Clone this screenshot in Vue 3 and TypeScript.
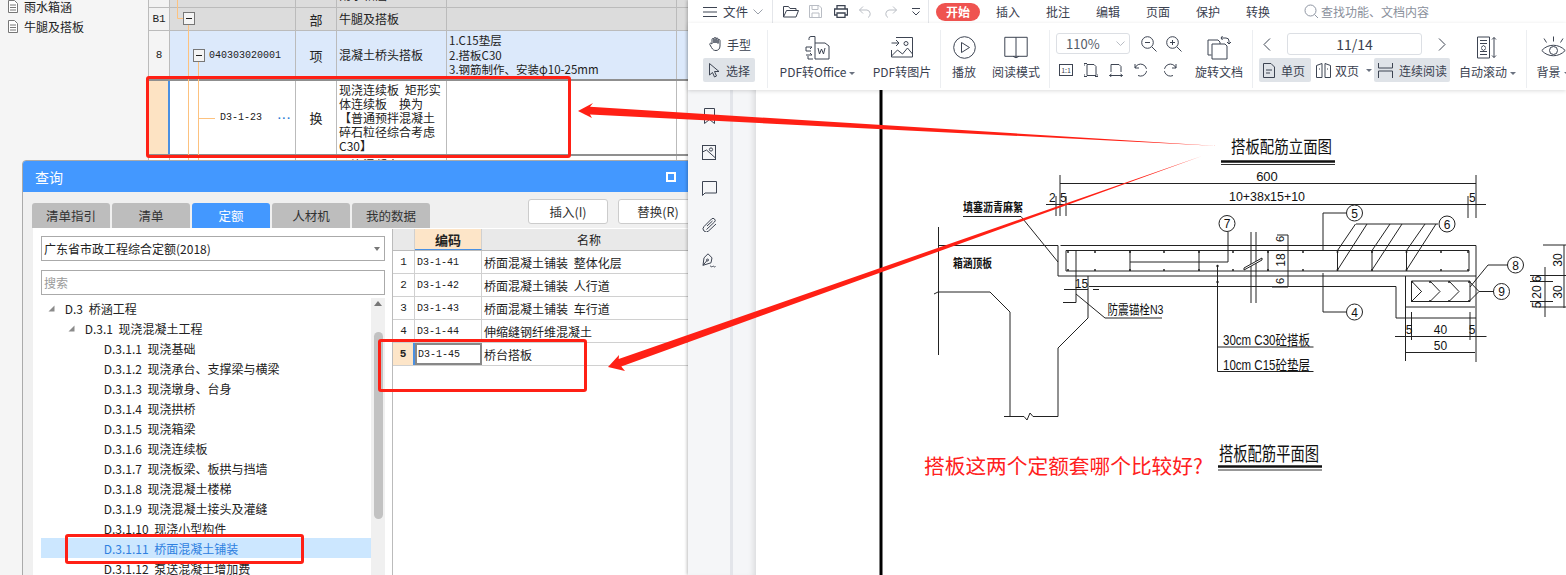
<template>
  <div class="screen">
    <!-- estimating app -->
    <section class="app">
      <aside class="side-tree">
        <div class="side-item cut"><svg class="doc" width="10" height="13" viewBox="0 0 10 13"><path d="M.5.500h6l3 3v9h-9zM2 5h6M2 7.500h6M2 10h6" /></svg>雨水箱涵</div>
        <div class="side-item"><svg class="doc" width="10" height="13" viewBox="0 0 10 13"><path d="M.5.500h6l3 3v9h-9zM2 5h6M2 7.500h6M2 10h6" /></svg>牛腿及搭板</div>
      </aside>

      <div class="sheet">
        <div v-for="(row, i) in sheetRows" :key="i" class="sheet-row" :class="row.kind">
          <div class="c c-no">{{ row.no }}</div>
          <div class="c c-code"><template v-if="row.code">{{ row.code }}</template><span v-if="row.kind === 'active'" class="dots">···</span></div>
          <div class="c c-type">{{ row.type }}</div>
          <div class="c c-name"><div v-for="(l, n) in row.name" :key="n">{{ l }}</div></div>
          <div class="c c-feat"><div v-for="(l, n) in row.feat" :key="n">{{ l }}</div></div>
          <div class="c c-end"></div>
        </div>
        <svg class="connectors" width="80" height="160" viewBox="148 0 80 160">
          <path d="M177.500 0V18.500H183M188.500 24V160M198.500 61V160M199 118.500H215" fill="none" stroke="#fdc27f" />
          <g fill="#f4f4f4" stroke="#777">
            <rect x="183.500" y="12.500" width="11" height="12" />
            <rect x="193.500" y="49.500" width="11" height="12" />
          </g>
          <path d="M186 18.500h6M196 55.500h6" stroke="#222" />
        </svg>
      </div>

      <!-- query dialog -->
      <div class="dialog">
        <header class="dlg-head">
          <span>查询</span>
          <i class="maxi"></i>
        </header>
        <div class="dlg-bar">
          <div v-for="t in tabs" :key="t" class="tab" :class="{ on: t === '定额' }">{{ t }}</div>
          <button class="btn first">插入(I)</button>
          <button class="btn">替换(R)</button>
        </div>
        <div class="dlg-body">
          <div class="left-panel">
            <div class="field">广东省市政工程综合定额(2018)<i class="caret"></i></div>
            <div class="field search">搜索</div>
            <div class="tree-wrap">
              <div class="tree">
                <div v-for="n in treeRows" :key="n.text" class="tree-row" :class="[`lv${n.level}`, { sel: n.sel }]">
                  <svg v-if="n.level < 3" class="tri" width="7" height="7" viewBox="0 0 7 7"><path d="M6.500.500v6h-6z" fill="#8b8b8b" /></svg>
                  {{ n.text }}
                </div>
              </div>
              <div class="scroll">
                <svg width="10" height="7" viewBox="0 0 10 7"><path d="M5 1l4 5H1z" fill="#777" /></svg>
                <i class="thumb"></i>
              </div>
            </div>
          </div>
          <div class="quota">
            <div class="q-row q-head">
              <div class="q-no"></div>
              <div class="q-code">编码</div>
              <div class="q-name">名称</div>
            </div>
            <div v-for="(q, i) in quotaRows" :key="q.code" class="q-row" :class="{ cur: i === 4 }">
              <div class="q-no">{{ i + 1 }}</div>
              <div class="q-code">{{ q.code }}</div>
              <div class="q-name">{{ q.name }}</div>
            </div>
          </div>
        </div>
      </div>
    </section>

    <!-- pdf reader -->
    <section class="wps">
      <div class="top-row">
        <svg class="ic hamb" width="14" height="12" viewBox="0 0 14 12"><path d="M0 1.500h14M0 6h14M0 10.500h14" /></svg>
        <span class="file">文件</span>
        <svg class="ic chev" width="10" height="6" viewBox="0 0 10 6"><path d="M.5.500L5 5 9.500.500" /></svg>
        <i class="top-div"></i>
        <div class="quick">
          <svg class="ic" width="16" height="13" viewBox="0 0 16 13"><path d="M.5 12V1.500h5l1.500 2h6v2M.5 12l3-6.500h12L13 12z" /></svg>
        </div>
        <div class="quick">
          <svg class="ic off" width="13" height="13" viewBox="0 0 13 13"><path d="M.5.500h9.500l2.500 2.500v9.500H.5zM3 .500v4h6v-4M3 12.500V8h7v4.500" /></svg>
        </div>
        <div class="quick">
          <svg class="ic" width="14" height="13" viewBox="0 0 14 13"><path d="M3 4V.500h8V4M3 10H.500V4h13v6H11M3 8h8v4.500H3z" stroke-width="1.300" /></svg>
        </div>
        <div class="quick">
          <svg class="ic off" width="13" height="12" viewBox="0 0 13 12"><path d="M4 .500L.500 4 4 7.500M.500 4H8a4 4 0 0 1 1 7.500" /></svg>
        </div>
        <div class="quick">
          <svg class="ic off" width="13" height="12" viewBox="0 0 13 12"><path d="M9 .500L12.500 4 9 7.500M12.500 4H5a4 4 0 0 0-1 7.500" /></svg>
        </div>
        <div class="quick">
          <svg class="ic" width="8" height="8" viewBox="0 0 8 8"><path d="M0 .500h8M.500 3.500L4 7l3.500-3.500" /></svg>
        </div>
        <i class="top-div two"></i>
        <span class="pill">开始</span>
        <span v-for="m in menus" :key="m" class="menu">{{ m }}</span>
        <svg class="ic search-ic" width="15" height="15" viewBox="0 0 15 15"><circle cx="6.500" cy="6.500" r="5.500" /><path d="M10.500 10.500L14 14" /></svg>
        <span class="find">查找功能、文档内容</span>
      </div>

      <div class="ribbon">
        <div class="grp g-hand">
          <div class="mini up"><svg class="ic" width="13" height="14" viewBox="0 0 13 14"><path d="M3 7V2.500a1 1 0 0 1 2 0V6 1.500a1 1 0 0 1 2 0V6 2a1 1 0 0 1 2 0v4.500-3a1 1 0 0 1 2 0V9c0 3-2 4.500-4 4.500S4 13 2.500 10.500L.800 7.500c-.5-1 1-1.800 1.500-1z" /></svg>手型</div>
          <div class="mini hi"><svg class="ic" width="12" height="15" viewBox="0 0 12 15"><path d="M.5.500v11.500l3-2.500 2 4.500 2-1-2-4.500h4.500z" /></svg>选择</div>
        </div>

        <div class="grp g-pdf">
          <div class="big w77">
            <svg class="ic" width="25" height="25" viewBox="0 0 25 25"><path d="M10 8V1.500H6a2 2 0 0 0-2 2V5M10 8h10l4 3v13H10zM13 13l1.500 6 2-5 2 5 1.500-6M1 12h6M1 12v4h5M1 20h6M7 20l-2-2M7 12l-2 2M8 24H3v-3" /></svg>
            <span>PDF转Office<i class="drop"></i></span>
          </div>
          <div class="big w58">
            <svg class="ic" width="22" height="21" viewBox="0 0 22 21"><path d="M5 .500h16.500v19.500H.5v-7M.5 6h7M5 3l3 3-3 3M.5 19l6-6 5 4 5-6 5 6" /><circle cx="15" cy="6.500" r="2" /></svg>
            <span>PDF转图片</span>
          </div>
        </div>

        <div class="grp g-play">
          <div class="big w24">
            <svg class="ic" width="23" height="23" viewBox="0 0 23 23"><circle cx="11.500" cy="11.500" r="10.800" /><path d="M8.500 6.500v10l8-5z" /></svg>
            <span>播放</span>
          </div>
          <div class="big w48">
            <svg class="ic" width="24" height="22" viewBox="0 0 24 22"><path d="M.8.800H12v19H.800zM12 .800h11.200v19H12M9 19.800l3 1.500 3-1.500" /></svg>
            <span>阅读模式</span>
          </div>
        </div>

        <div class="grp g-zoom">
          <div class="zoom-tools">
            <div class="zoom-top">
              <div class="zoom-box">110%<svg class="ic off" width="9" height="5" viewBox="0 0 9 5"><path d="M.5.500L4.500 4.500 8.500.500" /></svg></div>
              <svg class="ic lens" width="16" height="16" viewBox="0 0 16 16"><circle cx="6.500" cy="6.500" r="5.800" /><path d="M10.800 10.800L15.500 15.500M4 6.500h5" /></svg>
              <svg class="ic lens" width="16" height="16" viewBox="0 0 16 16"><circle cx="6.500" cy="6.500" r="5.800" /><path d="M10.800 10.800L15.500 15.500M4 6.500h5M6.500 4v5" /></svg>
            </div>
            <div class="zoom-bottom">
              <svg class="ic" width="14" height="12" viewBox="0 0 14 12"><rect x=".5" y=".5" width="13" height="11" /><text x="7" y="9" class="mini-t">1:1</text></svg>
              <svg class="ic" width="14" height="14" viewBox="0 0 14 14"><path d="M3 1.500h7l2 2v9H3zM0 3V.5h3M0 11v2.500h3M14 11v2.500h-3" /></svg>
              <svg class="ic" width="14" height="14" viewBox="0 0 14 14"><path d="M2 9V1.500h8l2 2V9M.5 12.500h13M2.500 11L.5 12.500 2.500 14M11.500 11l2 1.500-2 1.500" /></svg>
              <svg class="ic" width="16" height="14" viewBox="0 0 16 14"><path d="M1 5a6 6 0 1 1 3 7.500M1 1v4h4" stroke-dasharray="15 2" /></svg>
              <svg class="ic" width="16" height="14" viewBox="0 0 16 14"><path d="M15 5a6 6 0 1 0-3 7.500M15 1v4h-4" stroke-dasharray="15 2" /></svg>
            </div>
          </div>
          <div class="big w48 rot">
            <svg class="ic" width="24" height="25" viewBox="0 0 24 25"><path d="M4.500 20H1V5h10l2 2v2M5 9h13l2 2v13H5zM14 3h5a3 3 0 0 1 3 3v2M15.500 1L14 3l1.500 2M20 7l2 2 2-2" /></svg>
            <span>旋转文档</span>
          </div>
        </div>

        <div class="grp g-read">
          <div class="read-col">
            <div class="pager">
              <svg class="ic" width="8" height="13" viewBox="0 0 8 13"><path d="M7 .500L1 6.500l6 6" /></svg>
              <div class="page-box">11/14</div>
              <svg class="ic" width="8" height="13" viewBox="0 0 8 13"><path d="M1 .500l6 6-6 6" /></svg>
            </div>
            <div class="views">
              <div class="view hi v-one"><svg class="ic" width="12" height="15" viewBox="0 0 12 15"><path d="M.5.500h7.500l3.500 3.500v10.500H.5zM3 7h6M3 10h4" /></svg>单页</div>
              <div class="view v-two"><svg class="ic" width="15" height="15" viewBox="0 0 15 15"><path d="M.5 2.500L6 .500v14H.5zM14.500 2.500L9 .500v14h5.500zM3 6h1M11 6h1" /></svg>双页<i class="drop"></i></div>
              <div class="view hi v-cont"><svg class="ic" width="15" height="15" viewBox="0 0 15 15"><path d="M.5 0v5h14V0M.5 15V8h14v7" /></svg>连续阅读</div>
            </div>
          </div>
          <div class="big w57 auto">
            <svg class="ic" width="21" height="22" viewBox="0 0 21 22"><path d="M.5.500h12v21H.5zM3 4h7M3 7h7M3 15h7M3 18h7M4 11l2.500-2L9 11M4 12l2.500 2L9 12M17 1v20M15 3l2-2 2 2M15 19l2 2 2-2" /></svg>
            <span>自动滚动<i class="drop"></i></span>
          </div>
        </div>

        <div class="grp g-bg">
          <div class="big w24">
            <svg class="ic" width="25" height="24" viewBox="0 0 25 24"><path d="M.8 15c6-7 17-7 23.400 0-6.400 7-17.400 7-23.400 0z" /><circle cx="12.500" cy="15" r="4" /><path d="M12.500 1v5M3 3l2.500 4M22 3l-2.500 4" /></svg>
            <span>背景<i class="drop"></i></span>
          </div>
        </div>
      </div>

      <div class="reader">
        <nav class="rail">
          <div class="rail-icons">
            <svg class="ic" width="11" height="16" viewBox="0 0 11 16"><path d="M.5.500h10v15l-5-4-5 4z" /></svg>
            <svg class="ic" width="14" height="15" viewBox="0 0 14 15"><rect x=".5" y=".5" width="13" height="14" /><circle cx="9" cy="4.500" r="1.600" /><path d="M.5 7l4-2 9 8" /></svg>
            <svg class="ic" width="15" height="15" viewBox="0 0 15 15"><path d="M.5.500h14v11.500H3L.5 14.500z" /></svg>
            <svg class="ic" width="15" height="15" viewBox="0 0 15 15"><path d="M4.500 12.500L12.500 5a2 2 0 0 0-3-3L2 9.500a3 3 0 0 0 4.500 4.500L14 7M5 9l5.500-5" /></svg>
            <svg class="ic" width="16" height="16" viewBox="0 0 16 16"><path d="M7 .8l4 4-1 5-8 2.500 1-7.500zM2 12.300L6 7.500M9 13.500c1-1.500 1.500 1.500 2.500 0s1.500 1.500 3 0" /><circle cx="6.500" cy="7" r="1" /></svg>
          </div>
          <i class="rail-gap"></i>
        </nav>
        <div class="canvas">
          <svg class="cad" width="810" height="485" viewBox="756 90 810 485">
            <path d="M881 90V575" stroke="#000" stroke-width="3" fill="none" />
            <g fill="none" stroke="#222" stroke-width="1">
              <!-- dimensions -->
              <path d="M1060 175V216M1476 175V218M1060 183.500H1476M1046 204.500H1486M1066 196V216M1468 196V218M1056 196V216" />
              <!-- deck slab and abutment -->
              <path d="M938.500 227V355M938.500 245.500H1058V276H1476M1060.500 245.500H1476V362M1066 250.500H1469V271H1066zM1076 250.500V302.500H1063M1130 250.500V271M1199 250.500V271M1268 250.500V271M1337.500 250.500V271M1372 250.500V271M1406.500 250.500V271" />
              <path d="M1130 262H1228V232M1089 286.500H1396V318H1476M1405.500 276V307H1475M1411.500 281H1470V301.500H1411.500z" />
              <path d="M1251 232V303M1256 232V303" />
              <path d="M934 294L938 292H990L1010 312V416.500M1004 416.500H1024L1027 420L1030 413L1033 416.500H1058V348L1088 318V276" />
              <path d="M1064 289.500H1088M1093 289.500H1099M1076 294L1105 318H1162M1021 216.500L1058 262M963 216.500H1021" />
              <path d="M1288 235V287M1277 235H1288M1272 287H1288" />
              <!-- call-outs -->
              <path d="M1323 250V213H1346M1323 273V312H1346M1356 224H1438M1337.500 270L1367 224M1337.500 250.500L1355.500 224M1372 250.500L1390 224M1372 270L1402 224M1406.500 250.500L1425 224M1406.500 270L1436 224" />
              <path d="M1411.500 281L1421.500 291.500 1411.500 301.500M1430 281L1440 291.500 1430 301.500M1449 281L1459 291.500 1449 301.500M1469 281L1479 291.500 1469 301.500M1411.500 301.500L1421.500 291.500M1479 291.500H1494M1470 287L1488 265H1508" />
              <circle cx="1227" cy="223.500" r="8" /><circle cx="1354.500" cy="213" r="8" /><circle cx="1447" cy="224" r="8" /><circle cx="1354.500" cy="312" r="8" /><circle cx="1515.500" cy="265" r="8" /><circle cx="1501.500" cy="291.500" r="8" />
              <!-- leader and bottom dims -->
              <path d="M1217.500 266V371.500H1313.500M1217.500 347H1313.500M1395 336.500H1486.500M1411.500 312V340M1470 312V340M1405.500 307V361M1405.500 352.500H1475" />
              <path d="M1543 245H1566M1530 275.500H1566M1564 245V308M1545 267V317M1530 281.500H1553M1530 301.500H1553M1536 307H1566" />
            </g>
            <path d="M1244 268L1262 258V260L1244 270z" fill="#fff" stroke="#222" />
            <g fill="#222">
              <circle v-for="x in slabDots" :key="`t${x}`" :cx="x" cy="252" r="1" />
              <circle v-for="x in slabDots" :key="`b${x}`" :cx="x" cy="270" r="1" />
              <circle cx="1217.500" cy="266" r="1.200" /><circle cx="1217.500" cy="282" r="1.200" />
              <circle v-for="x in blockDots" :key="`u${x}`" :cx="x" cy="282" r="1" />
              <circle v-for="x in blockDots" :key="`l${x}`" :cx="x" cy="301" r="1" />
            </g>
            <g fill="#111" class="cad-t">
              <text x="1231" y="153" font-size="17" textLength="101" lengthAdjust="spacingAndGlyphs">搭板配筋立面图</text>
              <text x="963" y="212" font-size="12" textLength="60" font-weight="700" lengthAdjust="spacingAndGlyphs">填塞沥青麻絮</text>
              <text x="953" y="268" font-size="12" textLength="39" font-weight="700" lengthAdjust="spacingAndGlyphs">箱涵顶板</text>
              <text x="1107.500" y="314" font-size="13" textLength="56" lengthAdjust="spacingAndGlyphs">防震锚栓N3</text>
              <text x="1223" y="345" font-size="14" textLength="87" lengthAdjust="spacingAndGlyphs">30cm C30砼搭板</text>
              <text x="1223" y="370" font-size="14" textLength="87" lengthAdjust="spacingAndGlyphs">10cm C15砼垫层</text>
              <text x="1219" y="461" font-size="19" textLength="100" lengthAdjust="spacingAndGlyphs">搭板配筋平面图</text>
              <text x="1267" y="181" font-size="13" text-anchor="middle">600</text>
              <text x="1267" y="201" font-size="13" text-anchor="middle" textLength="76" lengthAdjust="spacingAndGlyphs">10+38x15+10</text>
              <text x="1049" y="202" font-size="12">2</text><text x="1060" y="202" font-size="12">5</text><text x="1469" y="202" font-size="12">5</text>
              <text x="1081.500" y="288" font-size="12" text-anchor="middle">15</text>
              <text x="1227" y="228" font-size="12" text-anchor="middle">7</text><text x="1354.500" y="217.500" font-size="12" text-anchor="middle">5</text><text x="1447" y="228.500" font-size="12" text-anchor="middle">6</text><text x="1354.500" y="316.500" font-size="12" text-anchor="middle">4</text><text x="1515.500" y="269.500" font-size="12" text-anchor="middle">8</text><text x="1501.500" y="296" font-size="12" text-anchor="middle">9</text>
              <text x="1409" y="334" font-size="12" text-anchor="middle">5</text><text x="1440.500" y="334" font-size="12" text-anchor="middle">40</text><text x="1472" y="334" font-size="12" text-anchor="middle">5</text><text x="1440.500" y="350" font-size="12" text-anchor="middle">50</text>
              <text font-size="12" text-anchor="middle" transform="translate(1285 260) rotate(-90)">18</text>
              <text font-size="11" text-anchor="middle" transform="translate(1284 239) rotate(-90)">6</text>
              <text font-size="11" text-anchor="middle" transform="translate(1284 281) rotate(-90)">6</text>
              <text font-size="12" text-anchor="middle" transform="translate(1562 260) rotate(-90)">30</text>
              <text font-size="12" text-anchor="middle" transform="translate(1562 292) rotate(-90)">30</text>
              <text font-size="12" text-anchor="middle" transform="translate(1541 279) rotate(-90)">6</text>
              <text font-size="12" text-anchor="middle" transform="translate(1541 292) rotate(-90)">20</text>
              <text font-size="12" text-anchor="middle" transform="translate(1541 305) rotate(-90)">5</text>
            </g>
            <path d="M1221 161.500H1335M1218 466.500H1322" stroke="#111" stroke-width="2.500" fill="none" />
            <path d="M1221 164.500H1335M1218 470H1322" stroke="#333" fill="none" />
          </svg>
          <p class="question">搭板这两个定额套哪个比较好?</p>
        </div>
      </div>
    </section>

    <!-- annotations drawn on top of the screenshot -->
    <i class="mark m1"></i>
    <i class="mark m2"></i>
    <i class="mark m3"></i>
    <svg class="arrows" width="1566" height="575" viewBox="0 0 1566 575">
      <polygon points="578,111 593,103 590,106.800 1218,146 590,114.500 592,118" fill="#ff2015" />
      <polygon points="608,367 619,355 618.700,359 1202,156 621.300,366.500 625,371" fill="#ff2015" />
    </svg>
  </div>
</template>

<script setup lang="ts">
type SheetRow = {
  kind: string;
  no: string;
  code: string;
  type: string;
  name: string[];
  feat: string[];
};

const sheetRows: SheetRow[] = [
  { kind: "part cut", no: "", code: "", type: "部", name: ["雨水箱涵"], feat: [] },
  { kind: "part", no: "B1", code: "", type: "部", name: ["牛腿及搭板"], feat: [] },
  {
    kind: "item",
    no: "8",
    code: "040303020001",
    type: "项",
    name: ["混凝土桥头搭板"],
    feat: ["1.C15垫层", "2.搭板C30", "3.钢筋制作、安装φ10-25mm"]
  },
  {
    kind: "active",
    no: "",
    code: "D3-1-23",
    type: "换",
    name: ["现浇连续板 矩形实", "体连续板　换为", "【普通预拌混凝土", "碎石粒径综合考虑", "C30】"],
    feat: []
  },
  { kind: "next", no: "", code: "", type: "", name: ["现浇混凝土"], feat: [] }
];

const tabs = ["清单指引", "清单", "定额", "人材机", "我的数据"];
const menus = ["插入", "批注", "编辑", "页面", "保护", "转换"];

const treeRows = [
  { level: 1, text: "D.3 桥涵工程" },
  { level: 2, text: "D.3.1 现浇混凝土工程" },
  { level: 3, text: "D.3.1.1 现浇基础" },
  { level: 3, text: "D.3.1.2 现浇承台、支撑梁与横梁" },
  { level: 3, text: "D.3.1.3 现浇墩身、台身" },
  { level: 3, text: "D.3.1.4 现浇拱桥" },
  { level: 3, text: "D.3.1.5 现浇箱梁" },
  { level: 3, text: "D.3.1.6 现浇连续板" },
  { level: 3, text: "D.3.1.7 现浇板梁、板拱与挡墙" },
  { level: 3, text: "D.3.1.8 现浇混凝土楼梯" },
  { level: 3, text: "D.3.1.9 现浇混凝土接头及灌缝" },
  { level: 3, text: "D.3.1.10 现浇小型构件" },
  { level: 3, text: "D.3.1.11 桥面混凝土铺装", sel: true },
  { level: 3, text: "D.3.1.12 泵送混凝土增加费" }
];

const quotaRows = [
  { code: "D3-1-41", name: "桥面混凝土铺装 整体化层" },
  { code: "D3-1-42", name: "桥面混凝土铺装 人行道" },
  { code: "D3-1-43", name: "桥面混凝土铺装 车行道" },
  { code: "D3-1-44", name: "伸缩缝钢纤维混凝土" },
  { code: "D3-1-45", name: "桥台搭板" }
];

const slabDots = [1068, 1095, 1130, 1164, 1199, 1233, 1268, 1303, 1337.5, 1372, 1406.5, 1441, 1468];
const blockDots = [1412, 1430, 1449, 1469];
</script>

<style>
html,
body {
  margin: 0;
  background: #fff;
}
</style>

<style scoped>
.screen {
  position: relative;
  display: flex;
  width: 1566px;
  height: 575px;
  overflow: hidden;
  background: #fff;
  color: #222;
  font-family: "Noto Sans CJK SC", "Liberation Sans", sans-serif;
  font-size: 12px;
}

/* estimating app */
.app {
  position: relative;
  display: flex;
  width: 688px;
  height: 575px;
  overflow: hidden;
  background: #f5f5f5;
}

.side-tree {
  width: 148px;
  flex: none;
  padding-left: 8px;
  box-sizing: border-box;
}

.side-item {
  display: flex;
  align-items: center;
  gap: 6px;
  height: 23px;
}

.side-item.cut {
  height: 18px;
  margin-top: -3px;
}

.doc {
  fill: #fff;
  stroke: #777;
  stroke-width: 1;
}

.sheet {
  position: relative;
  flex: 1;
  background: #fff;
  border-left: 1px solid #bbb;
  box-sizing: border-box;
}

.sheet-row {
  display: grid;
  grid-template-columns: 21px 126px 41px 110px 230px 11px;
  border-bottom: 1px solid #bbb;
  box-sizing: border-box;
}

.c {
  display: flex;
  flex-direction: column;
  justify-content: center;
  border-right: 1px solid #bbb;
  box-sizing: border-box;
  overflow: hidden;
  white-space: pre;
}

.c-no,
.c-type {
  align-items: center;
  font-size: 13px;
}

.c-no {
  font-family: "Liberation Mono", "Noto Sans CJK SC", monospace;
  font-size: 11px;
}

.c-code {
  flex-direction: row;
  align-items: center;
  justify-content: flex-start;
  padding-left: 39px;
  font-family: "Liberation Mono", "Noto Sans CJK SC", monospace;
  font-size: 10px;
}

.c-name {
  padding-left: 2px;
  line-height: 14px;
  word-spacing: 3px;
}

.c-feat {
  padding-left: 2px;
  line-height: 15px;
}

.c-end {
  border-right: 0;
}

.part {
  height: 23px;
  background: #dcdcdc;
}

.part .c-no {
  background: #f2f2f2;
}

.part.cut {
  height: 8px;
}

.part.cut .c {
  justify-content: flex-end;
  padding-bottom: 5px;
}

.item {
  height: 50px;
  background: #dce9fb;
  border-bottom: 2px solid #8f8f8f;
}

.item .c-no {
  background: #f4f4f4;
}

.item .c-feat {
  font-size: 11.500px;
  line-height: 14.500px;
}

.active {
  height: 75px;
  border-bottom: 2px solid #8f8f8f;
}

.active .c-no {
  background: #fde3c3;
  border-right: 2px solid #4a90e2;
}

.active .c-code {
  padding-left: 50px;
}

.dots {
  margin-left: 14px;
  color: #2f7fd6;
  font-size: 11px;
  font-weight: 700;
  letter-spacing: -2px;
}

.next {
  height: 20px;
}

.next .c-name {
  justify-content: flex-start;
  padding-top: 2px;
}

.connectors {
  position: absolute;
  top: 0;
  left: -1px;
}

/* query dialog */
.dialog {
  position: absolute;
  top: 160px;
  left: 22px;
  right: -10px;
  bottom: -2px;
  display: flex;
  flex-direction: column;
  background: #f0f0f0;
  border: 1px solid #aaa;
  border-radius: 4px 4px 0 0;
  box-sizing: border-box;
  overflow: hidden;
}

.dlg-head {
  display: flex;
  flex: none;
  align-items: center;
  justify-content: space-between;
  height: 31px;
  padding: 0 21px 0 12px;
  background: #4398ff;
  color: #fff;
  font-size: 14px;
}

.maxi {
  width: 6px;
  height: 6px;
  border: 2px solid #fff;
  background: #4398ff;
}

.dlg-bar {
  display: flex;
  flex: none;
  height: 29px;
  margin-top: 7px;
  padding-left: 9px;
  gap: 2px;
}

.tab {
  display: flex;
  align-items: center;
  justify-content: center;
  flex: none;
  width: 78px;
  height: 25px;
  margin-top: 4px;
  background: #bdbdbd;
  border-radius: 3px 3px 0 0;
  color: #333;
  font-size: 12.500px;
}

.tab.on {
  background: #4398ff;
  color: #fff;
}

.btn {
  flex: none;
  width: 80px;
  height: 25px;
  margin: 0 8px 0 0;
  background: #fff;
  border: 1px solid #ccc;
  border-radius: 3px;
  color: #333;
  font-family: inherit;
  font-size: 12.500px;
  padding: 0;
}

.btn.first {
  margin-left: 96px;
}

.dlg-body {
  display: flex;
  flex: 1;
  min-height: 0;
  margin-left: 10px;
  background: #fff;
}

.left-panel {
  display: flex;
  flex-direction: column;
  flex: none;
  width: 359px;
  padding: 8px 7px 0 8px;
  box-sizing: border-box;
  min-height: 0;
}

.field {
  display: flex;
  flex: none;
  align-items: center;
  justify-content: space-between;
  height: 25px;
  padding: 0 4px 0 2px;
  background: #fff;
  border: 1px solid #aaa;
  box-sizing: border-box;
  font-size: 12px;
}

.search {
  margin-top: 9px;
  color: #9a9a9a;
}

.caret {
  width: 0;
  height: 0;
  border-left: 3px solid transparent;
  border-right: 3px solid transparent;
  border-top: 4px solid #777;
}

.tree-wrap {
  display: flex;
  flex: 1;
  min-height: 0;
  margin-top: 3px;
}

.tree {
  flex: 1;
  overflow: hidden;
}

.tree-row {
  display: flex;
  align-items: center;
  height: 20px;
  white-space: pre;
  word-spacing: 3px;
}

.lv1 {
  padding-left: 7px;
}

.lv2 {
  padding-left: 27px;
}

.lv3 {
  padding-left: 57px;
}

.tri {
  margin-right: 4px;
}

.sel {
  background: #cce7ff;
  color: #2f80e0;
}

.scroll {
  display: flex;
  flex: none;
  flex-direction: column;
  align-items: center;
  width: 14px;
  padding-top: 2px;
  box-sizing: border-box;
  background: #f0f0f0;
}

.thumb {
  width: 9px;
  height: 187px;
  margin-top: 25px;
  background: #c2c2c2;
  border-radius: 5px;
}

.quota {
  flex: 1;
  background: #fff;
  border-left: 1px solid #bbb;
  margin-top: 1px;
}

.q-row {
  display: grid;
  grid-template-columns: 22px 67px 1fr;
  height: 23px;
  border-bottom: 1px solid #d0d0d0;
  box-sizing: border-box;
}

.q-row > div {
  display: flex;
  align-items: center;
  border-right: 1px solid #d0d0d0;
  box-sizing: border-box;
}

.q-no {
  justify-content: center;
  font-family: "Liberation Mono", monospace;
  font-size: 11px;
  background: #fff;
}

.q-code {
  padding-left: 2px;
  font-family: "Liberation Mono", monospace;
  font-size: 10px;
}

.q-name {
  padding-left: 2px;
  white-space: pre;
  word-spacing: 3px;
}

.q-head {
  height: 22px;
  background: #e9e9e9;
  border-bottom: 1px solid #bbb;
}

.q-head .q-no {
  background: #e9e9e9;
}

.q-head .q-code {
  justify-content: center;
  padding: 0;
  background: #fde5c8;
  border-bottom: 1px solid #4a90e2;
  font-family: inherit;
  font-size: 13px;
  font-weight: 700;
}

.q-head .q-name {
  justify-content: center;
  padding: 0;
}

.cur .q-no {
  background: #fde5c8;
  font-weight: 700;
  border-right: 2px solid #4a90e2;
}

.cur .q-code {
  border: 2px solid #888;
  padding-left: 1px;
}

/* pdf reader */
.wps {
  display: flex;
  flex-direction: column;
  width: 878px;
  flex: none;
  color: #3a4150;
  background: #fff;
  z-index: 1;
  box-shadow: -1px 0 3px rgba(0, 0, 0, 0.25);
}

.ic {
  flex: none;
  fill: none;
  stroke: #3d4452;
  stroke-width: 1;
}

.ic.off {
  stroke: #b9bdc4;
}

.top-row {
  display: flex;
  align-items: center;
  flex: none;
  height: 23px;
  padding-left: 15px;
}

.hamb {
  margin-right: 6px;
}

.file {
  width: 30px;
  font-size: 12.500px;
}

.chev {
  stroke: #9aa0aa;
}

.top-div {
  width: 1px;
  height: 23px;
  margin: 0 5px 0 9px;
  background: #e4e6ea;
}

.top-div.two {
  margin: 0 7px 0 0;
}

.quick {
  display: flex;
  align-items: center;
  justify-content: center;
  width: 25px;
}

.pill {
  width: 44px;
  height: 18px;
  margin-right: 3px;
  border-radius: 9px;
  background: #ef5350;
  color: #fff;
  font-size: 12px;
  font-weight: 700;
  line-height: 18px;
  text-align: center;
}

.menu {
  width: 50px;
  text-align: center;
}

.search-ic {
  margin: 0 2px 0 21px;
  stroke: #8f96a3;
}

.find {
  color: #8a909c;
}

.ribbon {
  display: flex;
  flex: none;
  height: 67px;
  background: #fff;
  box-shadow: 0 1px 4px rgba(0, 0, 0, 0.14);
  z-index: 1;
}

.grp {
  display: flex;
  flex: none;
  height: 58px;
  margin-top: 7px;
  padding-top: 5px;
  box-sizing: border-box;
  border-right: 1px solid #eceef1;
}

.big {
  display: flex;
  flex-direction: column;
  align-items: center;
  flex: none;
  white-space: nowrap;
}

.big svg {
  height: 25px;
}

.big span {
  margin-top: 4px;
  line-height: 16px;
}

.w24 {
  width: 24px;
}

.w48 {
  width: 48px;
}

.w57 {
  width: 57px;
}

.w58 {
  width: 58px;
}

.w77 {
  width: 77px;
}

.drop {
  display: inline-block;
  width: 0;
  height: 0;
  margin-left: 3px;
  vertical-align: 2px;
  border-left: 3px solid transparent;
  border-right: 3px solid transparent;
  border-top: 3px solid #6b7280;
}

.g-hand {
  flex-direction: column;
  width: 80px;
  padding-left: 15px;
  padding-top: 4px;
}

.mini {
  display: flex;
  align-items: center;
  gap: 5px;
  width: 52px;
  height: 24px;
  padding-left: 6px;
  box-sizing: border-box;
}

.mini.up {
  margin: -2px 0 2px;
}

.hi {
  background: #dfe3e8;
  border-radius: 2px;
}

.g-pdf {
  width: 173px;
  padding-left: 11px;
  gap: 17px;
}

.g-play {
  width: 109px;
  padding-left: 11px;
  gap: 16px;
}

.g-zoom {
  width: 203px;
  padding-left: 6px;
}

.zoom-tools {
  display: flex;
  flex-direction: column;
  width: 134px;
  margin-top: -2px;
}

.zoom-top {
  display: flex;
  align-items: center;
  height: 21px;
}

.zoom-box {
  display: flex;
  align-items: center;
  justify-content: space-between;
  flex: none;
  width: 74px;
  height: 21px;
  padding: 0 4px 0 9px;
  box-sizing: border-box;
  border: 1px solid #dcdfe4;
  border-radius: 3px;
  font-size: 13px;
  color: #555c68;
  margin-right: 11px;
}

.lens {
  margin-right: 9px;
}

.zoom-bottom {
  display: flex;
  align-items: center;
  gap: 11px;
  height: 20px;
  margin-top: 6px;
  padding-left: 3px;
}

.mini-t {
  fill: #3d4452;
  stroke: none;
  font-size: 7px;
  text-anchor: middle;
}

.rot {
  margin-left: 5px;
}

.g-read {
  width: 274px;
  padding-left: 6px;
}

.read-col {
  display: flex;
  flex-direction: column;
  width: 200px;
  margin-top: -2px;
}

.pager {
  display: flex;
  align-items: center;
  gap: 18px;
  height: 22px;
  padding-left: 4px;
}

.page-box {
  flex: none;
  width: 135px;
  height: 22px;
  margin: 0 -2px;
  border: 1px solid #dcdfe4;
  border-radius: 3px;
  box-sizing: border-box;
  text-align: center;
  font-size: 14px;
  line-height: 20px;
}

.views {
  display: flex;
  gap: 5px;
  margin-top: 3px;
  width: 192px;
}

.view {
  display: flex;
  align-items: center;
  flex: none;
  gap: 6px;
  height: 24px;
  padding-left: 4px;
  box-sizing: border-box;
  white-space: nowrap;
}

.v-one {
  width: 52px;
}

.v-two {
  width: 53px;
  padding-left: 0;
  gap: 4px;
}

.v-cont {
  width: 76px;
}

.g-bg {
  flex: 1;
  padding-left: 14px;
  border-right: 0;
}

.reader {
  display: flex;
  flex: 1;
  min-height: 0;
}

.rail {
  display: flex;
  flex: none;
  width: 68px;
  background: #f5f6f8;
  box-shadow: inset -6px 0 6px -4px rgba(0, 0, 0, 0.12);
}

.rail-icons {
  display: flex;
  flex-direction: column;
  align-items: center;
  gap: 21px;
  width: 42px;
  padding-top: 18px;
  box-sizing: border-box;
}

.rail-gap {
  width: 3px;
  background: #e3e5ea;
}

.canvas {
  position: relative;
  flex: 1;
  background: #fff;
}

.cad {
  display: block;
}

.cad-t {
  font-family: "Liberation Sans", "Noto Sans CJK SC", sans-serif;
}

.question {
  position: absolute;
  top: 361px;
  left: 168px;
  margin: 0;
  color: #ff2020;
  font-family: "Noto Sans CJK SC", sans-serif;
  font-size: 20.700px;
  line-height: 28px;
  white-space: nowrap;
}

/* red marks */
.mark {
  position: absolute;
  z-index: 2;
  box-sizing: border-box;
  border: 3px solid #ff2015;
  border-radius: 3px;
}

.m1 {
  left: 146px;
  top: 76px;
  width: 425px;
  height: 82px;
}

.m2 {
  left: 378px;
  top: 339px;
  width: 209px;
  height: 53px;
}

.m3 {
  left: 65px;
  top: 534px;
  width: 239px;
  height: 30px;
}

.arrows {
  position: absolute;
  top: 0;
  left: 0;
  z-index: 3;
  pointer-events: none;
}
</style>
